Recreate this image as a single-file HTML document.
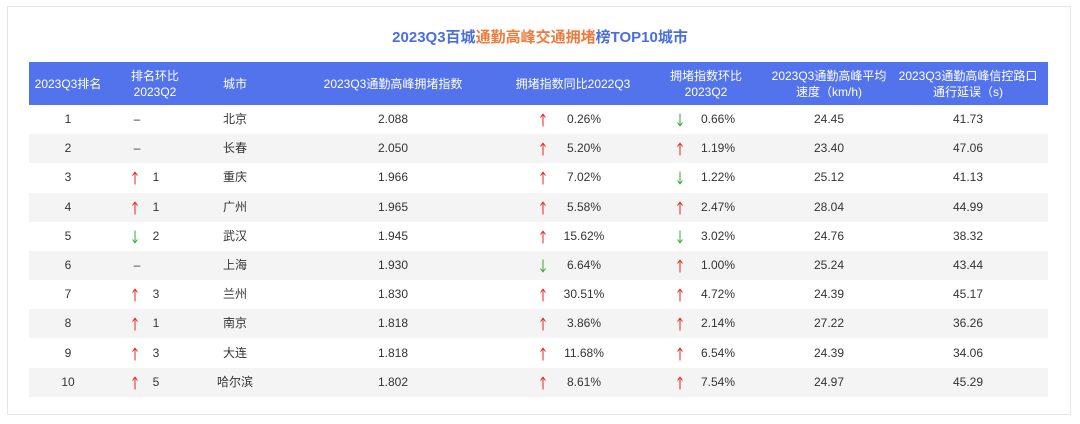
<!DOCTYPE html>
<html><head><meta charset="utf-8"><style>
body{margin:0;width:1080px;height:424px;background:#fff;font-family:"Liberation Sans","Noto Sans CJK SC",sans-serif;position:relative;overflow:hidden}
.box{position:absolute;left:7px;top:6px;width:1064px;height:409px;border:1px solid #e6e6e6;box-sizing:border-box}
.title{position:absolute;left:0;width:1080px;top:26px;text-align:center;font-size:15px;font-weight:bold;color:#4a6ee0}
.title span{color:#f07a3c}
.hdr{position:absolute;left:29px;top:62px;width:1019px;height:43px;background:#5273ec}
.row{position:absolute;left:29px;width:1019px;height:29px}
.row.g{background:#f4f4f4}
.c{position:absolute;transform:translateX(-50%);white-space:nowrap;text-align:center}
.hdr .c{color:#fff;font-size:12px;line-height:16px}
.row .c{color:#333;font-size:12px;line-height:29px;top:0}
.a{position:absolute;top:8px;width:8px;height:14px}
</style></head><body>
<div class="box"></div>
<div class="title">2023Q3百城<span>通勤高峰交通拥堵</span>榜TOP10城市</div>
<div class="hdr">
<div class="c" style="left:39px;top:14px">2023Q3排名</div>
<div class="c" style="left:126px;top:6px">排名环比<br>2023Q2</div>
<div class="c" style="left:206px;top:14px">城市</div>
<div class="c" style="left:364px;top:14px">2023Q3通勤高峰拥堵指数</div>
<div class="c" style="left:544px;top:14px">拥堵指数同比2022Q3</div>
<div class="c" style="left:677px;top:6px">拥堵指数环比<br>2023Q2</div>
<div class="c" style="left:800px;top:6px">2023Q3通勤高峰平均<br>速度（km/h)</div>
<div class="c" style="left:939px;top:6px">2023Q3通勤高峰信控路口<br>通行延误（s)</div>
</div>
<div id="rows"></div>
<script>
var U='<svg class="a" viewBox="0 0 8 14"><path d="M4 13.5V1.5M1.5 4.5L4 1.2L6.5 4.5" stroke="#e8271b" stroke-width="1" fill="none"/></svg>';
var D='<svg class="a" viewBox="0 0 8 14"><path d="M4 0.5V12.5M1.5 9.5L4 12.8L6.5 9.5" stroke="#3aa832" stroke-width="1" fill="none"/></svg>';
var d=[
[1,'-','','北京','2.088','u','0.26%','d','0.66%','24.45','41.73'],
[2,'-','','长春','2.050','u','5.20%','u','1.19%','23.40','47.06'],
[3,'u','1','重庆','1.966','u','7.02%','d','1.22%','25.12','41.13'],
[4,'u','1','广州','1.965','u','5.58%','u','2.47%','28.04','44.99'],
[5,'d','2','武汉','1.945','u','15.62%','d','3.02%','24.76','38.32'],
[6,'-','','上海','1.930','d','6.64%','u','1.00%','25.24','43.44'],
[7,'u','3','兰州','1.830','u','30.51%','u','4.72%','24.39','45.17'],
[8,'u','1','南京','1.818','u','3.86%','u','2.14%','27.22','36.26'],
[9,'u','3','大连','1.818','u','11.68%','u','6.54%','24.39','34.06'],
[10,'u','5','哈尔滨','1.802','u','8.61%','u','7.54%','24.97','45.29']];
function ar(t,x){return '<div style="position:absolute;left:'+(x-4)+'px;top:0">'+(t=='u'?U:D)+'</div>';}
var h='';
d.forEach(function(r,i){
var top=105+i*29.2;
h+='<div class="row'+(i%2?' g':'')+'" style="top:'+top+'px">';
h+='<div class="c" style="left:39px">'+r[0]+'</div>';
if(r[1]=='-')h+='<div class="c" style="left:108px">–</div>';
else h+=ar(r[1],106)+'<div class="c" style="left:127px">'+r[2]+'</div>';
h+='<div class="c" style="left:206px">'+r[3]+'</div>';
h+='<div class="c" style="left:364px">'+r[4]+'</div>';
h+=ar(r[5],514)+'<div class="c" style="left:555px">'+r[6]+'</div>';
h+=ar(r[7],651)+'<div class="c" style="left:689px">'+r[8]+'</div>';
h+='<div class="c" style="left:800px">'+r[9]+'</div>';
h+='<div class="c" style="left:939px">'+r[10]+'</div>';
h+='</div>';});
document.getElementById('rows').innerHTML=h;
</script>
</body></html>
